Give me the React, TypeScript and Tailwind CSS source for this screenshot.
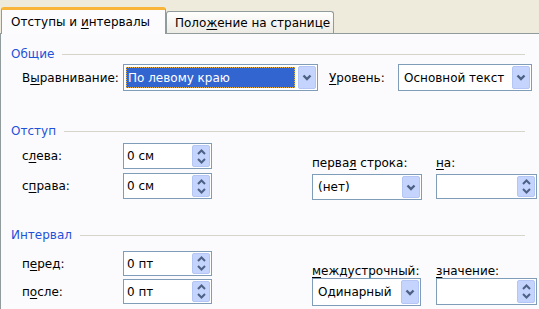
import type { ReactNode } from "react";

// Word 2003 "Абзац" dialog, first tab

function Chevron({ dir }: { dir: "up" | "down" }) {
  return (
    <svg width="9" height="6" viewBox="0 0 9 6" className="block">
      <path
        d={dir === "up" ? "M1 5 L4.5 1.5 L8 5" : "M1 1 L4.5 4.5 L8 1"}
        fill="none"
        stroke="#4d6185"
        strokeWidth="2"
      />
    </svg>
  );
}

function Spin({ value = "", width = 89, height = 26 }: { value?: string; width?: number; height?: number }) {
  return (
    <div
      className="flex items-stretch border border-[#7f9db9] bg-white"
      style={{ width, height }}
    >
      <span className="flex flex-1 items-center pl-[3px]">{value}</span>
      <div className="m-[1px] flex w-[18px] flex-col items-center justify-center gap-[3px] rounded-[2px] border border-[#b3c6f5] bg-[#c4d4fc]">
        <Chevron dir="up" />
        <Chevron dir="down" />
      </div>
    </div>
  );
}

function Select({
  value,
  width,
  height = 26,
  selected = false,
}: {
  value: string;
  width: number;
  height?: number;
  selected?: boolean;
}) {
  return (
    <div
      className="flex items-stretch border border-[#7f9db9] bg-white"
      style={{ width, height }}
    >
      <div className="flex min-w-0 flex-1 items-center p-[2px]">
        {selected ? (
          <span className="flex h-full w-full items-center border border-dotted border-[#e8b048] bg-[#3265d0] pl-[1px] text-white">
            {value}
          </span>
        ) : (
          <span className="pl-[3px]">{value}</span>
        )}
      </div>
      <div className="m-[1px] flex w-[18px] items-center justify-center rounded-[2px] border border-[#b3c6f5] bg-[#c4d4fc]">
        <svg width="10" height="7" viewBox="0 0 10 7" className="block">
          <path d="M1.5 1.5 L5 5 L8.5 1.5" fill="none" stroke="#4d6185" strokeWidth="2.4" />
        </svg>
      </div>
    </div>
  );
}

function Label({ pre, key_, post }: { pre: string; key_: string; post: string }) {
  return (
    <span>
      {pre}
      <span className="underline underline-offset-2">{key_}</span>
      {post}
    </span>
  );
}

function GroupHeader({ title, children }: { title: string; children?: ReactNode }) {
  return (
    <div className="flex h-4 items-center pl-[10px] pr-[14px]">
      <span className="text-[#1f52d8]">{title}</span>
      <div className="ml-2 h-px flex-1 bg-[#d6d5cc]" />
      {children}
    </div>
  );
}

export default function App() {
  return (
    <div
      className="flex h-[309px] w-[539px] flex-col overflow-hidden whitespace-nowrap bg-[#efebdc] text-[12px] leading-4 text-black"
      style={{ fontFamily: '"DejaVu Sans", Tahoma, sans-serif' }}
    >
      {/* Tabs */}
      <div className="flex h-[33px] items-end pl-[1px]">
        <div className="relative z-10 -mb-px flex h-[27px] w-[165px] items-center rounded-t-[3px] border border-b-0 border-[#919b9c] border-t-[3px] border-t-[#f9b53a] bg-[#fcfcfe] pl-[9px]">
          <Label pre="Отступы и " key_="и" post="нтервалы" />
        </div>
        <div className="flex h-[22px] w-[168px] items-center rounded-t-[3px] border border-b-0 border-[#919b9c] bg-gradient-to-b from-white to-[#ecebe4] pl-[8px]">
          <Label pre="Поло" key_="ж" post="ение на странице" />
        </div>
      </div>

      {/* Panel */}
      <div className="flex flex-1 flex-col border-l border-t border-[#919b9c] bg-[#fbfbfd]">
        <div className="mt-[12px]">
          <GroupHeader title="Общие" />
        </div>
        <div className="mt-[2px] flex items-center pl-[21px]">
          <span className="w-[101px]">
            <Label pre="В" key_="ы" post="равнивание:" />
          </span>
          <Select value="По левому краю" width={195} height={27} selected />
          <span className="ml-[11px] w-[69px]">
            <Label pre="" key_="У" post="ровень:" />
          </span>
          <Select value="Основной текст" width={134} height={27} />
        </div>

        <div className="mt-[32px]">
          <GroupHeader title="Отступ" />
        </div>
        <div className="flex pl-[21px]">
          <div className="mt-[4px] flex flex-col gap-[4px]">
            <div className="flex items-center">
              <span className="w-[101px]">
                <Label pre="с" key_="л" post="ева:" />
              </span>
              <Spin value="0 см" />
            </div>
            <div className="flex items-center">
              <span className="w-[101px]">
                <Label pre="с" key_="п" post="рава:" />
              </span>
              <Spin value="0 см" />
            </div>
          </div>
          <div className="ml-[100px] mt-[16px] flex flex-col">
            <div className="flex">
              <span className="w-[124px]">
                <Label pre="перва" key_="я" post=" строка:" />
              </span>
              <Label pre="" key_="н" post="а:" />
            </div>
            <div className="mt-[3px] flex">
              <Select value="(нет)" width={110} />
              <div className="ml-[14px]">
                <Spin width={101} height={25} />
              </div>
            </div>
          </div>
        </div>

        <div className="mt-[27px]">
          <GroupHeader title="Интервал" />
        </div>
        <div className="flex pl-[21px]">
          <div className="mt-[8px] flex flex-col gap-[3px]">
            <div className="flex items-center">
              <span className="w-[101px]">
                <Label pre="п" key_="е" post="ред:" />
              </span>
              <Spin value="0 пт" height={25} />
            </div>
            <div className="flex items-center">
              <span className="w-[101px]">
                <Label pre="п" key_="о" post="сле:" />
              </span>
              <Spin value="0 пт" height={25} />
            </div>
          </div>
          <div className="ml-[100px] mt-[20px] flex flex-col">
            <div className="flex">
              <span className="w-[124px]">
                <Label pre="" key_="м" post="еждустрочный:" />
              </span>
              <Label pre="" key_="з" post="начение:" />
            </div>
            <div className="mt-[-1px] flex">
              <Select value="Одинарный" width={109} height={28} />
              <div className="ml-[15px]">
                <Spin width={101} height={27} />
              </div>
            </div>
          </div>
        </div>
      </div>
    </div>
  );
}
